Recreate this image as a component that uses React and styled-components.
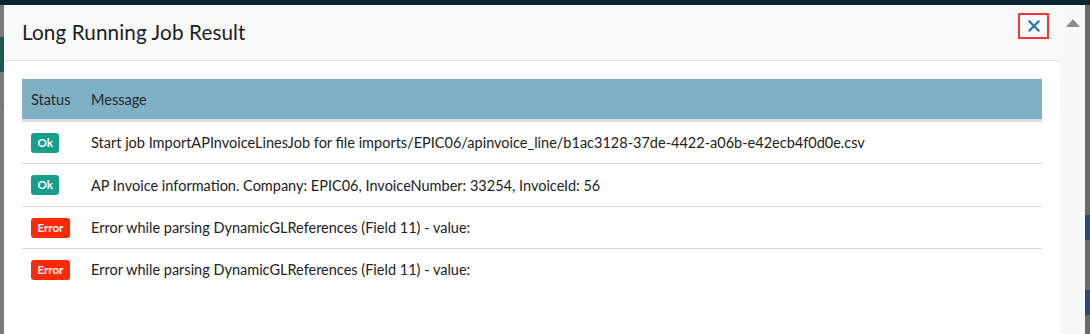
import React from "react";
import styled, { createGlobalStyle } from "styled-components";

const GlobalStyle = createGlobalStyle`
  html, body { margin: 0; padding: 0; }
  body {
    background: #6f6f6f;
    overflow: hidden;
    font-family: Lato, "Liberation Sans", Arial, sans-serif;
    color: #222;
  }
`;

const Screen = styled.div`
  height: 334px;
  display: flex;
  flex-direction: column;
  overflow: hidden;
`;

const TopBand = styled.div`
  height: 5px;
  flex: none;
  background: #0a2430;
`;

const Stage = styled.div`
  flex: 1;
  display: flex;
  min-height: 0;
`;

const EdgeStrip = styled.div`
  flex: none;
  width: ${(p) => p.$w}px;
  background: ${(p) => p.$bg};
`;

const Modal = styled.div`
  flex: 1;
  display: flex;
  background: #fff;
  min-width: 0;
`;

const ModalMain = styled.div`
  flex: 1;
  display: flex;
  flex-direction: column;
  min-width: 0;
`;

const Header = styled.div`
  height: 55px;
  flex: none;
  display: flex;
  align-items: center;
  justify-content: space-between;
  padding: 0 11px 0 18px;
  background: #f9f9f9;
  border-bottom: 1px solid #e4e4e4;
`;

const Title = styled.h2`
  margin: 0 0 1px;
  font-size: 20.7px;
  font-weight: 400;
  color: #1e1e1e;
  letter-spacing: 0.1px;
`;

const CloseButton = styled.button`
  align-self: flex-start;
  margin-top: 8px;
  width: 31px;
  height: 26px;
  padding: 0;
  display: flex;
  align-items: center;
  justify-content: center;
  background: transparent;
  border: 2px solid #f03a3a;
  cursor: pointer;
`;

const Body = styled.div`
  padding: 18px;
`;

const Table = styled.table`
  width: 100%;
  border-collapse: collapse;
  font-size: 14.5px;
`;

const HeadCell = styled.th`
  height: 40px;
  padding: 0 9px;
  text-align: left;
  font-weight: 400;
  color: #1f2a30;
  background: #7fb0c5;
  border-bottom: 3px solid #dedede;
  width: ${(p) => (p.$narrow ? "42px" : "auto")};
`;

const Row = styled.tr`
  border-bottom: 1px solid #dcdcdc;
  &:last-child { border-bottom: none; }
`;

const Cell = styled.td`
  height: 41.4px;
  padding: 0 9px;
  vertical-align: middle;
  color: #222;
  white-space: nowrap;
`;

const Badge = styled.span`
  display: inline-block;
  height: 20px;
  line-height: 20px;
  padding: 0 6.5px;
  border-radius: 3px;
  font-size: 11.5px;
  font-weight: 700;
  color: #fff;
  background: ${(p) => (p.$kind === "error" ? "#fd2a0a" : "#189f8b")};
  vertical-align: middle;
`;

const ScrollTrack = styled.div`
  flex: none;
  width: 25px;
  background: #f8f8f8;
  display: flex;
  justify-content: center;
  padding-top: 14px;
`;

const ScrollArrow = styled.div`
  width: 0;
  height: 0;
  border-left: 7.5px solid transparent;
  border-right: 7.5px solid transparent;
  border-bottom: 8px solid #8c8c8c;
`;

const rows = [
  {
    status: "ok",
    message:
      "Start job ImportAPInvoiceLinesJob for file imports/EPIC06/apinvoice_line/b1ac3128-37de-4422-a06b-e42ecb4f0d0e.csv",
  },
  {
    status: "ok",
    message:
      "AP Invoice information. Company: EPIC06, InvoiceNumber: 33254, InvoiceId: 56",
  },
  {
    status: "error",
    message: "Error while parsing DynamicGLReferences (Field 11) - value:",
  },
  {
    status: "error",
    message: "Error while parsing DynamicGLReferences (Field 11) - value:",
  },
];

const leftBg = `linear-gradient(to bottom,
  #7c7c7c 0px, #7c7c7c 32px,
  #1f5a4c 32px, #1f5a4c 67px,
  #7a7a7a 67px, #7a7a7a 100px,
  #6e6e6e 100px, #6e6e6e 101px,
  #7a7a7a 101px)`;

const rightBg = `linear-gradient(to bottom,
  #6a6a6a 0px, #6a6a6a 210px,
  #2b4a6c 210px, #2b4a6c 235px,
  #6a6a6a 235px, #6a6a6a 285px,
  #2b4a6c 285px, #2b4a6c 310px,
  #6a6a6a 310px)`;

export default function App() {
  return (
    <>
      <GlobalStyle />
      <Screen>
        <TopBand />
        <Stage>
          <EdgeStrip $w={4} $bg={leftBg} />
          <Modal>
            <ModalMain>
              <Header>
                <Title>Long Running Job Result</Title>
                <CloseButton aria-label="Close">
                  <svg width="12" height="12" viewBox="0 0 12 12">
                    <path
                      d="M1.5 1.5 L10.5 10.5 M10.5 1.5 L1.5 10.5"
                      stroke="#2474a8"
                      strokeWidth="2.2"
                      strokeLinecap="square"
                    />
                  </svg>
                </CloseButton>
              </Header>
              <Body>
                <Table>
                  <thead>
                    <tr>
                      <HeadCell $narrow>Status</HeadCell>
                      <HeadCell>Message</HeadCell>
                    </tr>
                  </thead>
                  <tbody>
                    {rows.map((r, i) => (
                      <Row key={i}>
                        <Cell>
                          <Badge $kind={r.status}>
                            {r.status === "error" ? "Error" : "Ok"}
                          </Badge>
                        </Cell>
                        <Cell>{r.message}</Cell>
                      </Row>
                    ))}
                  </tbody>
                </Table>
              </Body>
            </ModalMain>
            <ScrollTrack>
              <ScrollArrow />
            </ScrollTrack>
          </Modal>
          <EdgeStrip $w={5} $bg={rightBg} />
        </Stage>
      </Screen>
    </>
  );
}
